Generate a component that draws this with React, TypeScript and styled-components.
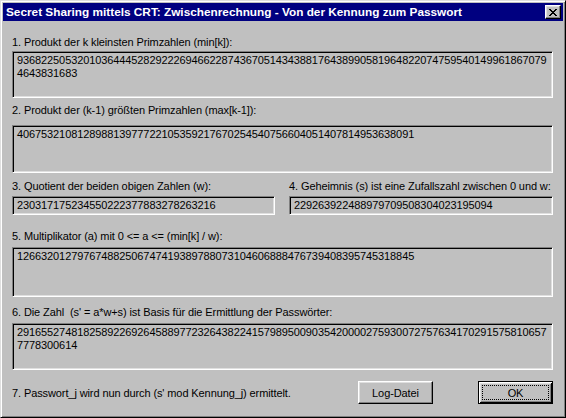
import React from 'react';
import styled, { createGlobalStyle } from 'styled-components';

const GlobalStyle = createGlobalStyle`
  html, body {
    margin: 0;
    padding: 0;
    background: #c0c0c0;
  }
  * {
    box-sizing: border-box;
  }
`;

const Window = styled.div`
  width: 566px;
  height: 418px;
  background: #c0c0c0;
  border: 1px solid;
  border-color: #dfdfdf #000 #000 #dfdfdf;
  box-shadow: inset 1px 1px #fff, inset -1px -1px #808080;
  padding: 2px;
  font-family: 'Liberation Sans', Arial, sans-serif;
  font-size: 11px;
  letter-spacing: -0.1px;
  color: #000;
  display: flex;
  flex-direction: column;
`;

const TitleBar = styled.div`
  height: 18px;
  background: #000080;
  color: #fff;
  display: flex;
  align-items: center;
  padding: 0 2px 0 3px;
`;

const Title = styled.span`
  flex: 1;
  font-weight: bold;
  font-size: 11.8px;
  letter-spacing: 0;
  white-space: nowrap;
`;

const CloseButton = styled.div`
  width: 16px;
  height: 14px;
  background: #c0c0c0;
  border: 1px solid;
  border-color: #fff #000 #000 #fff;
  box-shadow: inset -1px -1px #808080, inset 1px 1px #dfdfdf;
  display: flex;
  align-items: center;
  justify-content: center;
  padding-right: 1px;
`;

const Content = styled.div`
  padding: 15px 10px 0 9px;
  display: flex;
  flex-direction: column;
`;

const Label = styled.div<{ $mt: number }>`
  margin-top: ${({ $mt }) => $mt}px;
  height: 13px;
  line-height: 13px;
  white-space: nowrap;
`;

const Field = styled.div<{ $mt: number; $h: number }>`
  margin-top: ${({ $mt }) => $mt}px;
  height: ${({ $h }) => $h}px;
  background: #c0c0c0;
  border: 1px solid;
  border-color: #808080 #fff #fff #808080;
  box-shadow: inset 1px 1px #000, inset -1px -1px #dfdfdf;
  padding: 2px 2px 0 4px;
  line-height: 13px;
  white-space: nowrap;
  overflow: hidden;
`;

const Row = styled.div`
  display: grid;
  grid-template-columns: 263px 1fr;
  column-gap: 14px;
`;

const Column = styled.div`
  display: flex;
  flex-direction: column;
`;

const Footer = styled.div`
  margin-top: 11px;
  display: flex;
  align-items: center;
  gap: 45px;
`;

const FooterText = styled.div`
  flex: 1;
  white-space: nowrap;
`;

const Button = styled.div<{ $default?: boolean }>`
  position: relative;
  width: 75px;
  height: 23px;
  background: #c0c0c0;
  display: flex;
  align-items: center;
  justify-content: center;
  border: 1px solid;
  border-color: ${({ $default }) => ($default ? '#000' : '#fff #000 #000 #fff')};
  box-shadow: ${({ $default }) =>
    $default
      ? 'inset 1px 1px #fff, inset -1px -1px #000, inset 2px 2px #dfdfdf, inset -2px -2px #808080'
      : 'inset -1px -1px #808080, inset 1px 1px #dfdfdf'};

  &::after {
    content: '';
    display: ${({ $default }) => ($default ? 'block' : 'none')};
    position: absolute;
    inset: 3px;
    border: 1px dotted #000;
  }
`;

const CloseGlyph = () => (
  <svg width="8" height="7" viewBox="0 0 8 7" shapeRendering="crispEdges">
    <g fill="#000">
      <rect x="0" y="0" width="2" height="1" />
      <rect x="6" y="0" width="2" height="1" />
      <rect x="1" y="1" width="2" height="1" />
      <rect x="5" y="1" width="2" height="1" />
      <rect x="2" y="2" width="4" height="1" />
      <rect x="3" y="3" width="2" height="1" />
      <rect x="2" y="4" width="4" height="1" />
      <rect x="1" y="5" width="2" height="1" />
      <rect x="5" y="5" width="2" height="1" />
      <rect x="0" y="6" width="2" height="1" />
      <rect x="6" y="6" width="2" height="1" />
    </g>
  </svg>
);

const Lines: React.FC<{ lines: string[] }> = ({ lines }) => (
  <>
    {lines.map((l, i) => (
      <div key={i}>{l}</div>
    ))}
  </>
);

const App: React.FC = () => {
  return (
    <>
      <GlobalStyle />
      <Window>
        <TitleBar>
          <Title>Secret Sharing mittels CRT: Zwischenrechnung - Von der Kennung zum Passwort</Title>
          <CloseButton>
            <CloseGlyph />
          </CloseButton>
        </TitleBar>
        <Content>
          <Label $mt={0}>1. Produkt der k kleinsten Primzahlen (min[k]):</Label>
          <Field $mt={2} $h={47}>
            <Lines lines={['9368225053201036444528292226946622874367051434388176438990581964822074759540149961867079', '4643831683']} />
          </Field>

          <Label $mt={6}>2. Produkt der (k-1) größten Primzahlen (max[k-1]):</Label>
          <Field $mt={8} $h={48}>
            <Lines lines={['406753210812898813977722105359217670254540756604051407814953638091']} />
          </Field>

          <Row>
            <Column>
              <Label $mt={7}>3. Quotient der beiden obigen Zahlen (w):</Label>
              <Field $mt={3} $h={19}>230317175234550222377883278263216</Field>
            </Column>
            <Column>
              <Label $mt={7}>4. Geheimnis (s) ist eine Zufallszahl zwischen 0 und w:</Label>
              <Field $mt={3} $h={19}>229263922488979709508304023195094</Field>
            </Column>
          </Row>

          <Label $mt={15}>5. Multiplikator (a) mit 0 &lt;= a &lt;= (min[k] / w):</Label>
          <Field $mt={4} $h={50}>
            <Lines lines={['126632012797674882506747419389788073104606888476739408395745318845']} />
          </Field>

          <Label $mt={9}>6. Die Zahl &nbsp;(s' = a*w+s) ist Basis für die Ermittlung der Passwörter:</Label>
          <Field $mt={4} $h={47}>
            <Lines lines={['2916552748182589226926458897723264382241579895009035420000275930072757634170291575810657', '7778300614']} />
          </Field>

          <Footer>
            <FooterText>7. Passwort_j wird nun durch (s' mod Kennung_j) ermittelt.</FooterText>
            <Button>Log-Datei</Button>
            <Button $default>OK</Button>
          </Footer>
        </Content>
      </Window>
    </>
  );
};

export default App;
